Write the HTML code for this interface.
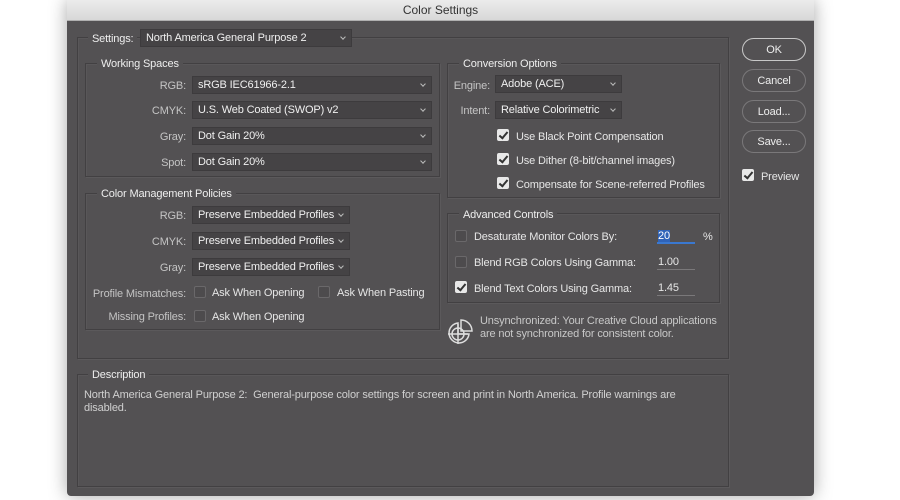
<!DOCTYPE html>
<html><head><meta charset="utf-8"><style>
*{margin:0;padding:0;box-sizing:border-box}
body{width:900px;height:500px;background:#fff;position:relative;overflow:hidden;font-family:"Liberation Sans",Arial,sans-serif;font-size:11px;letter-spacing:-0.15px;color:#e6e6e6}
.win{position:absolute;left:67px;top:0;width:747px;height:496px;background:#535153;box-shadow:0 0 18px rgba(0,0,0,.35);border-radius:0 0 4px 4px}
.title{position:absolute;left:67px;top:0;width:747px;height:21px;background:linear-gradient(#ececec,#d8d8d8);border-bottom:1px solid #b0b0b0;color:#333;font-size:12px;text-align:center;line-height:21px;letter-spacing:0}
.a{position:absolute;white-space:nowrap;margin-top:1px}
.box{position:absolute;border:1px solid #424042;box-shadow:inset 1px 1px 0 rgba(255,255,255,.04),1px 1px 0 rgba(255,255,255,.05)}
.lg{position:absolute;background:#535153;padding:0 4px;color:#eee;font-size:11px;line-height:12px;margin-top:1px}
.lbl{position:absolute;text-align:right;color:#c4c4c4;white-space:nowrap;margin-top:1px}
.dd{position:absolute;background:#454345;border:1px solid #3d3b3d;height:18px;line-height:17px;padding-left:5px;color:#f0f0f0;white-space:nowrap}
.dd:after{content:"";position:absolute;right:6px;top:5px;width:3px;height:3px;border-right:1px solid #bbb;border-bottom:1px solid #bbb;transform:rotate(45deg)}
.cb{position:absolute;width:12px;height:12px;border:1px solid #6a686a;border-radius:2px;background:#4d4b4d}
.cb.on{background:#e8e8e8;border-color:#e8e8e8}
.cb.on:after{content:"";position:absolute;left:3px;top:0px;width:3px;height:7px;border-right:2px solid #333;border-bottom:2px solid #333;transform:rotate(40deg)}
.btn{position:absolute;left:742px;width:64px;height:23px;border:1px solid #7a787a;border-radius:12px;text-align:center;line-height:22px;color:#eee}
.inp{position:absolute;width:38px;border-bottom:1px solid #7a787a;height:15px;padding-left:1px;line-height:15px}
</style></head><body>
<div class="win"></div>
<div class="title">Color Settings</div>

<div class="box" style="left:77px;top:37px;width:652px;height:322px"></div>
<div class="lg" style="left:88px;top:32px;font-size:11px">Settings:</div>
<div class="dd" style="left:140px;top:29px;width:212px">North America General Purpose 2</div>

<div class="box" style="left:85px;top:63px;width:355px;height:114px"></div>
<div class="lg" style="left:97px;top:57px">Working Spaces</div>
<div class="lbl" style="left:120px;width:66px;top:79px">RGB:</div>
<div class="dd" style="left:192px;top:76px;width:240px">sRGB IEC61966-2.1</div>
<div class="lbl" style="left:120px;width:66px;top:104px">CMYK:</div>
<div class="dd" style="left:192px;top:101px;width:240px">U.S. Web Coated (SWOP) v2</div>
<div class="lbl" style="left:120px;width:66px;top:130px">Gray:</div>
<div class="dd" style="left:192px;top:127px;width:240px">Dot Gain 20%</div>
<div class="lbl" style="left:120px;width:66px;top:156px">Spot:</div>
<div class="dd" style="left:192px;top:153px;width:240px">Dot Gain 20%</div>

<div class="box" style="left:85px;top:193px;width:355px;height:137px"></div>
<div class="lg" style="left:97px;top:187px">Color Management Policies</div>
<div class="lbl" style="left:120px;width:66px;top:209px">RGB:</div>
<div class="dd" style="left:192px;top:206px;width:158px">Preserve Embedded Profiles</div>
<div class="lbl" style="left:120px;width:66px;top:235px">CMYK:</div>
<div class="dd" style="left:192px;top:232px;width:158px">Preserve Embedded Profiles</div>
<div class="lbl" style="left:120px;width:66px;top:261px">Gray:</div>
<div class="dd" style="left:192px;top:258px;width:158px">Preserve Embedded Profiles</div>
<div class="lbl" style="left:80px;width:106px;top:287px">Profile Mismatches:</div>
<div class="cb" style="left:194px;top:286px"></div>
<div class="a" style="left:212px;top:286px">Ask When Opening</div>
<div class="cb" style="left:318px;top:286px"></div>
<div class="a" style="left:337px;top:286px">Ask When Pasting</div>
<div class="lbl" style="left:80px;width:106px;top:310px">Missing Profiles:</div>
<div class="cb" style="left:194px;top:310px"></div>
<div class="a" style="left:212px;top:310px">Ask When Opening</div>

<div class="box" style="left:447px;top:63px;width:273px;height:135px"></div>
<div class="lg" style="left:459px;top:57px">Conversion Options</div>
<div class="lbl" style="left:440px;width:50px;top:79px">Engine:</div>
<div class="dd" style="left:495px;top:75px;width:127px">Adobe (ACE)</div>
<div class="lbl" style="left:440px;width:50px;top:104px">Intent:</div>
<div class="dd" style="left:495px;top:101px;width:127px">Relative Colorimetric</div>
<div class="cb on" style="left:497px;top:129px"></div>
<div class="a" style="left:516px;top:130px">Use Black Point Compensation</div>
<div class="cb on" style="left:497px;top:153px"></div>
<div class="a" style="left:516px;top:154px">Use Dither (8-bit/channel images)</div>
<div class="cb on" style="left:497px;top:177px"></div>
<div class="a" style="left:516px;top:178px">Compensate for Scene-referred Profiles</div>

<div class="box" style="left:447px;top:213px;width:273px;height:90px"></div>
<div class="lg" style="left:459px;top:208px">Advanced Controls</div>
<div class="cb" style="left:455px;top:230px"></div>
<div class="a" style="left:474px;top:230px">Desaturate Monitor Colors By:</div>
<div class="inp" style="left:657px;top:229px;border-bottom:2px solid #3a78d0"><span style="background:#2f63b8;color:#fff">20</span></div>
<div class="a" style="left:703px;top:230px">%</div>
<div class="cb" style="left:455px;top:256px"></div>
<div class="a" style="left:474px;top:256px">Blend RGB Colors Using Gamma:</div>
<div class="inp" style="left:657px;top:255px">1.00</div>
<div class="cb on" style="left:455px;top:281px"></div>
<div class="a" style="left:474px;top:282px">Blend Text Colors Using Gamma:</div>
<div class="inp" style="left:657px;top:281px">1.45</div>

<svg class="a" style="left:446px;top:318px;margin:0" width="28" height="28" viewBox="0 0 28 28" fill="none" stroke="#ddd" stroke-width="1.5">
<path d="M12 5 A10 10 0 1 0 23 16 L12 16 Z"/>
<circle cx="12" cy="16" r="6"/>
<path d="M2 16 H22 M12 6 V26"/>
<path d="M15 2 A11 11 0 0 1 26 13 L15 13 Z"/>
</svg>
<div class="a" style="left:480px;top:314px;color:#c8c8c8;line-height:13px">Unsynchronized: Your Creative Cloud applications<br>are not synchronized for consistent color.</div>

<div class="box" style="left:77px;top:374px;width:652px;height:113px"></div>
<div class="lg" style="left:88px;top:368px">Description</div>
<div class="a" style="left:84px;top:388px;color:#d0d0d0;line-height:13px">North America General Purpose 2:&nbsp; General-purpose color settings for screen and print in North America. Profile warnings are<br>disabled.</div>

<div class="btn" style="top:38px;border-color:#c8c8c8">OK</div>
<div class="btn" style="top:69px">Cancel</div>
<div class="btn" style="top:100px">Load...</div>
<div class="btn" style="top:130px">Save...</div>
<div class="cb on" style="left:742px;top:169px"></div>
<div class="a" style="left:761px;top:170px">Preview</div>
</body></html>
